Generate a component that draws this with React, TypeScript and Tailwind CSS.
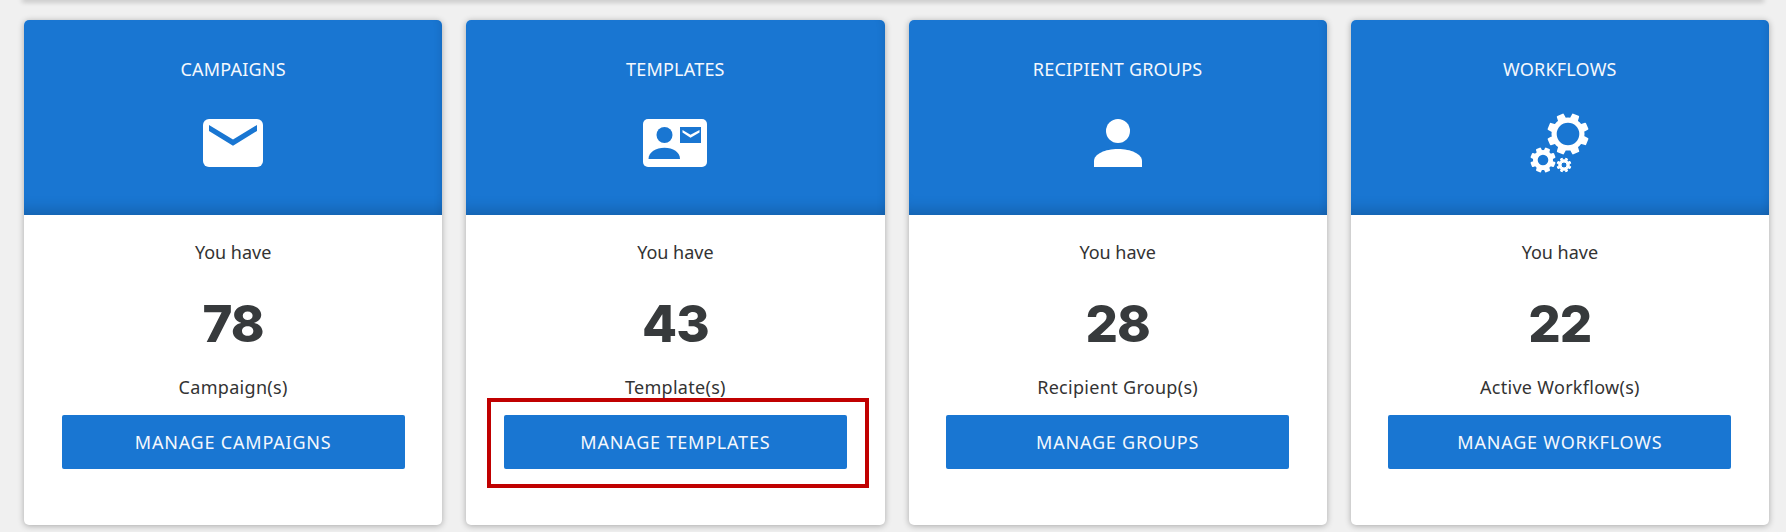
const cards = [
  { title: "CAMPAIGNS", count: 78, label: "Campaign(s)", action: "MANAGE CAMPAIGNS", icon: <MailIcon /> },
  { title: "TEMPLATES", count: 43, label: "Template(s)", action: "MANAGE TEMPLATES", icon: <ContactIcon />, marked: true },
  { title: "RECIPIENT GROUPS", count: 28, label: "Recipient Group(s)", action: "MANAGE GROUPS", icon: <PersonIcon /> },
  { title: "WORKFLOWS", count: 22, label: "Active Workflow(s)", action: "MANAGE WORKFLOWS", icon: <GearsIcon /> },
];

function MailIcon() {
  return (
    <svg width="60" height="48" viewBox="0 0 60 48">
      <rect width="60" height="48" rx="6" fill="#fff" />
      <path d="M6 6 L30 20.500 L54 6 V12 L30 26.700 L6 12 Z" fill="#1976d2" />
    </svg>
  );
}

function ContactIcon() {
  return (
    <svg width="64" height="48" viewBox="0 0 64 48">
      <rect width="64" height="48" rx="5" fill="#fff" />
      <circle cx="21.500" cy="16" r="8" fill="#1976d2" />
      <path d="M5.500 40 C5.500 33 13 28.700 21.500 28.700 C30 28.700 37 33 37 40 Z" fill="#1976d2" />
      <rect x="37" y="8" width="21" height="16" fill="#1976d2" />
      <path d="M39.500 11 L47.500 15.800 L56.500 11 V13.500 L47.500 18.800 L39.500 13.500 Z" fill="#fff" />
    </svg>
  );
}

function PersonIcon() {
  return (
    <svg width="48" height="48" viewBox="0 0 48 48">
      <circle cx="24" cy="12" r="12" fill="#fff" />
      <path d="M0 48 V42 C0 35 11 30 24 30 C37 30 48 35 48 42 V48 Z" fill="#fff" />
    </svg>
  );
}

function gearPath(cx: number, cy: number, outer: number, root: number, hole: number, teeth: number, phase: number) {
  let d = "";
  for (let i = 0; i < teeth; i++) {
    const step = (Math.PI * 2) / teeth;
    const a = phase + i * step;
    const pts: [number, number][] = [
      [root, a - step * 0.5],
      [root, a - step * 0.27],
      [outer, a - step * 0.18],
      [outer, a + step * 0.18],
      [root, a + step * 0.27],
    ];
    pts.forEach(([r, t], j) => {
      const x = (cx + r * Math.cos(t)).toFixed(2);
      const y = (cy + r * Math.sin(t)).toFixed(2);
      d += `${i === 0 && j === 0 ? "M" : "L"}${x} ${y} `;
    });
  }
  d += `Z M${cx + hole} ${cy} A${hole} ${hole} 0 1 0 ${cx - hole} ${cy} A${hole} ${hole} 0 1 0 ${cx + hole} ${cy} Z`;
  return d;
}

function GearsIcon() {
  return (
    <svg width="62" height="62" viewBox="0 0 62 62">
      <g fill="#fff" stroke="#fff" strokeWidth="2" strokeLinejoin="round" fillRule="evenodd">
        <path d={gearPath(39, 22, 20, 15.500, 12.300, 8, 0.39)} />
        <path d={gearPath(14, 48, 11.800, 9, 6.300, 8, 0.39)} />
      </g>
      <path d={gearPath(35, 53, 7, 5.200, 3, 8, 0.39)} fill="#fff" fillRule="evenodd" stroke="#fff" strokeWidth="1" strokeLinejoin="round" />
    </svg>
  );
}

export default function App() {
  return (
    <div className="h-[532px] overflow-hidden bg-[#f0f0f0] font-['Noto_Sans',sans-serif]">
      {/* strip of the panel above */}
      <div className="mx-6 h-0 shadow-[0_0_5px_2px_rgba(0,0,0,0.22)]" />
      <div className="grid grid-cols-4 gap-x-6 pl-6 pr-[17px] pt-5">
        {cards.map((card) => (
          <div key={card.title} className="flex h-[505px] flex-col items-center rounded-[5px] bg-white text-[#333] shadow-[0_1px_6px_rgba(0,0,0,0.3)]">
            <div className="flex h-[195px] w-full flex-col items-center rounded-t-[5px] bg-[#1976d2] shadow-[inset_0_-18px_16px_-14px_rgba(0,0,0,0.2),inset_-10px_0_10px_-10px_rgba(0,0,0,0.12)]">
              <h2 className="mt-[37px] text-[18px] leading-[24px] tracking-[0.2px] text-[#f4f8fd]">{card.title}</h2>
              <div className="mt-[31px] flex h-[62px] items-center justify-center">{card.icon}</div>
            </div>
            <p className="mt-[25px] text-[18px] leading-[24px]">You have</p>
            <p className="mt-[30px] font-['Inter',sans-serif] text-[51px] leading-[60px] font-extrabold tracking-[-1px] text-[#373a3c]">{card.count}</p>
            <p className="mt-[21px] text-[18px] leading-[24px] tracking-[0.3px]">{card.label}</p>
            <div className="relative mt-4">
              <button className="block h-[54px] w-[343px] rounded-[2px] bg-[#1976d2] text-[18px] tracking-[0.8px] text-[#f4f8fd]">{card.action}</button>
              {/* red annotation box over the button */}
              {card.marked && <div className="absolute -top-[17px] -right-[22px] -bottom-[19px] -left-[17px] border-4 border-[#c00000]" />}
            </div>
          </div>
        ))}
      </div>
    </div>
  );
}
